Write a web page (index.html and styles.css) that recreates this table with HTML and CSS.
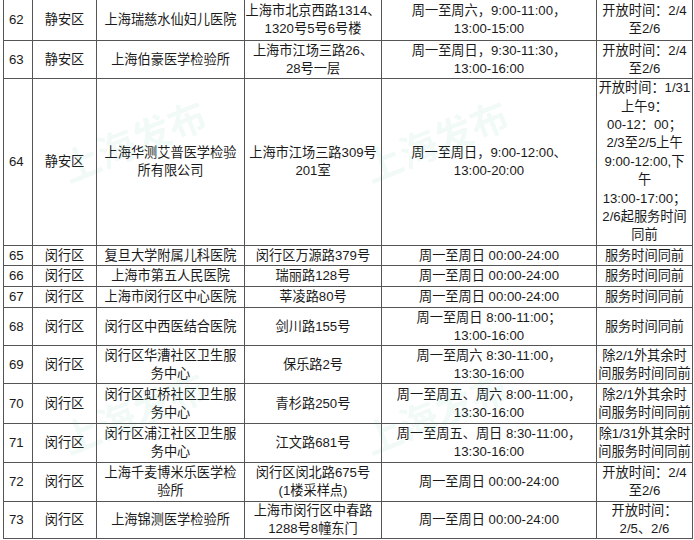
FILE: index.html
```html
<!DOCTYPE html>
<html lang="zh-CN">
<head>
<meta charset="utf-8">
<link rel="stylesheet" href="styles.css">
</head>
<body>
<div class="page">
<table class="sites">
<colgroup>
<col class="c-no"><col class="c-dist"><col class="c-name"><col class="c-addr"><col class="c-time"><col class="c-note">
</colgroup>
<tbody>
<tr class="h41"><td>62</td><td>静安区</td><td>上海瑞慈水仙妇儿医院</td><td>上海市北京西路1314、<br>1320号5号6号楼</td><td>周一至周六，9:00-11:00，<br>13:00-15:00</td><td>开放时间：2/4<br>至2/6</td></tr>
<tr class="h38"><td>63</td><td>静安区</td><td>上海伯豪医学检验所</td><td>上海市江场三路26、<br>28号一层</td><td>周一至周日，9:30-11:30，<br>13:00-16:00</td><td>开放时间：2/4<br>至2/6</td></tr>
<tr class="h167"><td>64</td><td>静安区</td><td>上海华测艾普医学检验<br>所有限公司</td><td>上海市江场三路309号<br>201室</td><td>周一至周日，9:00-12:00、<br>13:00-20:00</td><td class="tall">开放时间：1/31<br>上午9：<br>00-12：00；<br>2/3至2/5上午<br>9:00-12:00,下<br>午<br>13:00-17:00；<br>2/6起服务时间<br>同前</td></tr>
<tr class="h20"><td>65</td><td>闵行区</td><td>复旦大学附属儿科医院</td><td>闵行区万源路379号</td><td>周一至周日 00:00-24:00</td><td>服务时间同前</td></tr>
<tr class="h21"><td>66</td><td>闵行区</td><td>上海市第五人民医院</td><td>瑞丽路128号</td><td>周一至周日 00:00-24:00</td><td>服务时间同前</td></tr>
<tr class="h21"><td>67</td><td>闵行区</td><td>上海市闵行区中心医院</td><td>莘凌路80号</td><td>周一至周日 00:00-24:00</td><td>服务时间同前</td></tr>
<tr class="h38"><td>68</td><td>闵行区</td><td>闵行区中西医结合医院</td><td>剑川路155号</td><td>周一至周日 8:00-11:00；<br>13:00-16:00</td><td>服务时间同前</td></tr>
<tr class="h38"><td>69</td><td>闵行区</td><td>闵行区华漕社区卫生服<br>务中心</td><td>保乐路2号</td><td>周一至周六 8:30-11:00，<br>13:30-16:00</td><td>除2/1外其余时<br>间服务时间同前</td></tr>
<tr class="h40"><td>70</td><td>闵行区</td><td>闵行区虹桥社区卫生服<br>务中心</td><td>青杉路250号</td><td>周一至周五、周六 8:00-11:00，<br>13:30-16:00</td><td>除2/1外其余时<br>间服务时间同前</td></tr>
<tr class="h39"><td>71</td><td>闵行区</td><td>闵行区浦江社区卫生服<br>务中心</td><td>江文路681号</td><td>周一至周五、周日 8:30-11:00，<br>13:30-16:00</td><td>除1/31外其余时<br>间服务时间同前</td></tr>
<tr class="h39"><td>72</td><td>闵行区</td><td>上海千麦博米乐医学检<br>验所</td><td>闵行区闵北路675号<br>(1楼采样点)</td><td>周一至周日 00:00-24:00</td><td>开放时间：2/4<br>至2/6</td></tr>
<tr class="h37"><td>73</td><td>闵行区</td><td>上海锦测医学检验所</td><td>上海市闵行区中春路<br>1288号8幢东门</td><td>周一至周日 00:00-24:00</td><td>开放时间：<br>2/5、2/6</td></tr>
</tbody>
</table>
<div class="wm wm1">上海发布</div>
<div class="wm wm2">上海发布</div>
<div class="wm wm4">上海发布</div>
<div class="wm wm5">上海发布</div>
</div>
</body>
</html>
```
FILE: styles.css
```css
html, body {
  margin: 0;
  padding: 0;
  background: #ffffff;
  overflow: hidden;
}
.page {
  position: relative;
  width: 694px;
  height: 540px;
  overflow: hidden;
}
.sites {
  margin: -1px 0 0 3px;
  width: 689px;
  table-layout: fixed;
  border-collapse: collapse;
  font-family: "Liberation Sans", "Noto Sans CJK SC", sans-serif;
  font-size: 13.2px;
  line-height: 18px;
  color: #1a1a1a;
}
.c-no { width: 29px; }
.c-dist { width: 64px; }
.c-name { width: 148px; }
.c-addr { width: 137px; }
.c-time { width: 215px; }
.c-note { width: 96px; }
.sites td {
  border: 1px solid #555555;
  padding: 0;
  text-align: center;
  vertical-align: middle;
  white-space: nowrap;
  overflow: hidden;
  box-sizing: border-box;
}
.sites td:first-child { text-align: left; padding-left: 5px; }
.sites td.tall { line-height: 18.4px; }
.h20 td { height: 20px; }
.h21 td { height: 21px; }
.h37 td { height: 37px; }
.h38 td { height: 38px; }
.h39 td { height: 39px; }
.h40 td { height: 40px; }
.h41 td { height: 41px; }
.h167 td { height: 167px; }
.wm {
  position: absolute;
  font-family: "Noto Sans CJK SC", sans-serif;
  font-weight: 700;
  font-size: 38px;
  line-height: 1;
  color: rgba(40, 190, 140, 0.07);
  transform: rotate(-22deg);
  transform-origin: left bottom;
  pointer-events: none;
  white-space: nowrap;
}
.wm1 { left: 70px; top: 148px; }
.wm2 { left: 372px; top: 148px; }
.wm4 { left: 70px; top: 420px; }
.wm5 { left: 372px; top: 420px; }
```
